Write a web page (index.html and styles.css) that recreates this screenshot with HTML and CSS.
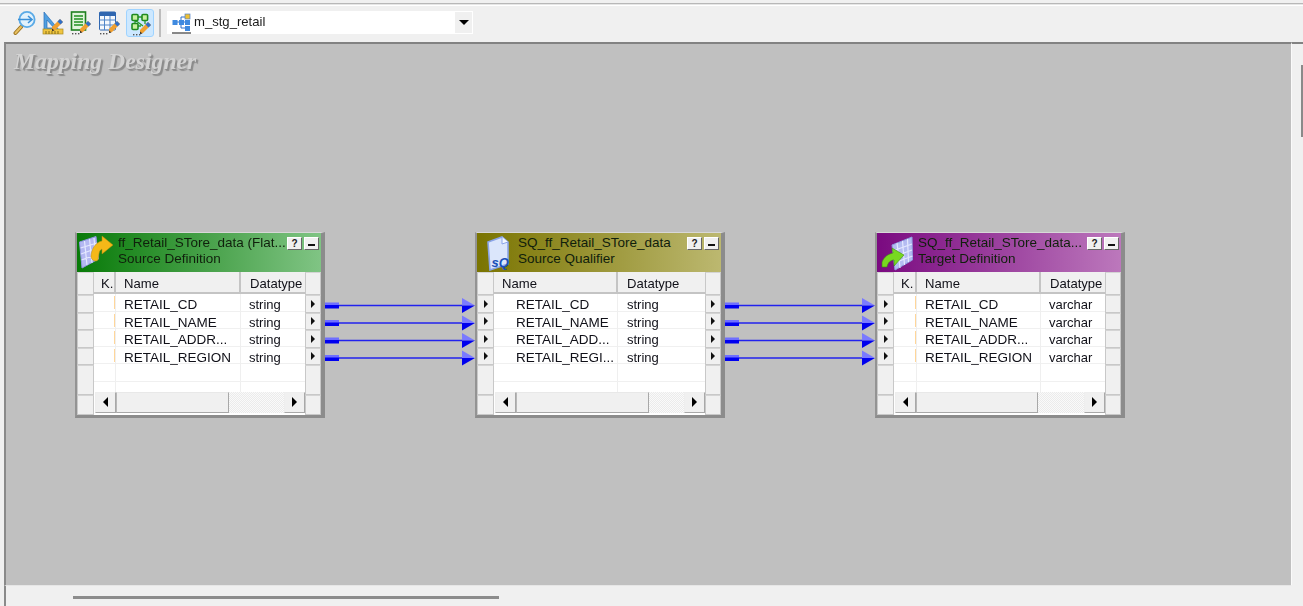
FILE: index.html
```html
<!DOCTYPE html>
<html lang="en">
<head>
<meta charset="utf-8">
<title>Mapping Designer</title>
<link rel="stylesheet" href="styles.css">
</head>
<body>
<svg class="defs" width="0" height="0" aria-hidden="true">
  <defs>
    <g id="pencil">
      <path d="M0 10 L8 2 L11 5 L3 13 L0 14 Z" fill="#f0a030"/>
      <path d="M5.5 4.5 L8 2 L11 5 L8.5 7.5 Z" fill="#2f6fc8"/>
      <path d="M0 11.5 L0 14 L2.5 13.5 Z" fill="#333"/>
    </g>
    <g id="dots" fill="#555">
      <rect x="0" width="1.4" height="1.4"/><rect x="3" width="1.4" height="1.4"/><rect x="6" width="1.4" height="1.4"/>
    </g>
  </defs>
</svg>
<div class="app">
  <div class="topline"></div>
  <div class="toolbar">
    <button class="tool" aria-label="Source Analyzer">
      <svg width="24" height="26" viewBox="0 0 24 26">
        <path d="M8 17 L2.5 23" stroke="#9c7420" stroke-width="4" stroke-linecap="round"/>
        <path d="M8 17 L2.5 23" stroke="#e8c060" stroke-width="2" stroke-linecap="round"/>
        <circle cx="14" cy="9.5" r="7.6" fill="#e2f2fc" stroke="#5aaae6" stroke-width="1.8"/>
        <path d="M5 9.5 H19 M15 6 L19 9.5 L15 13" fill="none" stroke="#3b90d8" stroke-width="1.6"/>
      </svg>
    </button>
    <button class="tool" aria-label="Target Designer">
      <svg width="22" height="26" viewBox="0 0 22 26">
        <path d="M2 2 L2 20 L17 20 Z M5 10 L5 18 L12 18 Z" fill="#4f9fe0" fill-rule="evenodd" stroke="#2a6db8" stroke-width=".7"/>
        <rect x="1" y="19" width="20" height="5" fill="#f0c540" stroke="#a88a20" stroke-width=".7"/>
        <path d="M4 21 V24 M7 21 V24 M10 21 V24 M13 21 V24 M16 21 V24" stroke="#6b5a12" stroke-width=".8"/>
        <use href="#pencil" x="10" y="7"/>
      </svg>
    </button>
    <button class="tool" aria-label="Transformation Developer">
      <svg width="22" height="26" viewBox="0 0 22 26">
        <rect x="1.5" y="2" width="14" height="18" fill="#e0f4dc" stroke="#1f8020" stroke-width="1.6"/>
        <path d="M4 6 H13 M4 9 H13 M4 12 H13 M4 15 H13" stroke="#1f9020" stroke-width="1.6"/>
        <use href="#pencil" x="10" y="9"/>
        <use href="#dots" x="2" y="23"/>
      </svg>
    </button>
    <button class="tool" aria-label="Mapplet Designer">
      <svg width="22" height="26" viewBox="0 0 22 26">
        <rect x="1.5" y="2" width="16" height="18" rx="1" fill="#f4f8fd" stroke="#2f66b0" stroke-width="1"/>
        <rect x="1.5" y="2" width="16" height="4" fill="#2f66b0"/>
        <path d="M1.5 10 H17.5 M1.5 15 H17.5 M6.5 6 V20 M12 6 V20" stroke="#4f85c8" stroke-width="1"/>
        <use href="#pencil" x="11" y="9"/>
        <use href="#dots" x="2" y="23"/>
      </svg>
    </button>
    <button class="tool tool-on" aria-label="Mapping Designer">
      <svg width="22" height="26" viewBox="0 0 22 26">
        <path d="M6 7 H16 M6 7 V16 M16 7 V14 M9 16 H12 M6 10 L14 16" stroke="#2a9a2a" stroke-width="1.3" fill="none"/>
        <rect x="3" y="4.5" width="6" height="6" rx="1" fill="#c8f0a0" stroke="#1f8a1f" stroke-width="1.6"/>
        <rect x="13" y="4.5" width="5.6" height="6" rx="1" fill="#c8f0a0" stroke="#1f8a1f" stroke-width="1.6"/>
        <rect x="3" y="13.5" width="6" height="6" rx="1" fill="#c8f0a0" stroke="#1f8a1f" stroke-width="1.6"/>
        <use href="#pencil" x="11" y="10"/>
        <use href="#dots" x="4" y="24"/>
      </svg>
    </button>
    <div class="sep"></div>
    <div class="combo">
      <svg class="combo-icon" width="20" height="22" viewBox="0 0 20 22">
        <path d="M4 10 H14 M9 5 V16 M9 5 H14 M9 16 H14" stroke="#2f6fc8" stroke-width="1"/>
        <rect x="0.5" y="8" width="5" height="5" fill="#3f8ae0"/>
        <rect x="7" y="8" width="5" height="5" fill="#3f8ae0"/>
        <rect x="13" y="2" width="5" height="5" fill="#f0c030" stroke="#4f7fc8" stroke-width=".7"/>
        <rect x="13" y="8" width="5" height="5" fill="#3f8ae0"/>
        <rect x="13" y="14" width="5" height="5" fill="#3f8ae0"/>
        <path d="M0 21 H19" stroke="#111" stroke-width="1"/>
      </svg>
      <span class="combo-text">m_stg_retail</span>
      <span class="combo-btn"><i class="down"></i></span>
    </div>
  </div>

  <div class="work">
    <div class="canvas">
      <div class="wm">Mapping Designer</div>

      <svg class="links" width="1285" height="542" viewBox="0 0 1285 542">
        <g id="linkset">
          <g id="l1">
            <path d="M318 258.5 H333 V262 H318 Z" fill="#6f6fff"/>
            <path d="M318 261 H333 V264.5 H318 Z" fill="#0000f0"/>
            <path d="M333 261.5 H456" stroke="#2222ee" stroke-width="1.5"/>
            <path d="M456 254 L469 261.5 L456 261.5 Z" fill="#7a7aff"/>
            <path d="M456 261.5 L469 261.5 L456 269 Z" fill="#0000ee"/>
          </g>
          <use href="#l1" y="17.5"/>
          <use href="#l1" y="35"/>
          <use href="#l1" y="52.5"/>
        </g>
        <use href="#linkset" x="400"/>
      </svg>

      <section class="node n1">
        <header class="title">
          <svg class="ticon" width="36" height="36" viewBox="0 0 36 36">
            <path d="M0.5 7 L17 1.5 L19.5 24 L3 33 Z" fill="#b4b8f2" stroke="#8f96e0" stroke-width="1"/>
            <path d="M5.5 6 L8 30 M10.5 4 L13 28 M15 3 L17 25 M1.5 13 L18 8 M2 19 L18.5 13 M2.5 25 L19 19" stroke="#e4e8ff" stroke-width="1.2"/>
            <path d="M12 22 C12 14 17 7 23 6 L23 1 L34 10 L23 19 L23 14 C20 15 20 19 19 25 C17 27 13 26 12 22 Z" fill="#f4b818" stroke="#b88a10" stroke-width=".5"/>
          </svg>
          <div class="ttext"><div>ff_Retail_STore_data (Flat...</div><div>Source Definition</div></div>
          <div class="tbtns"><button class="wbtn">?</button><button class="wbtn"><i class="min"></i></button></div>
        </header>
        <div class="body">
          <div class="gutter">
            <div class="g g-h"></div><div class="g"></div><div class="g"></div><div class="g"></div><div class="g"></div><div class="g g-t"></div><div class="g g-b"></div>
          </div>
          <div class="table">
            <div class="hdr"><span class="c ck">K.</span><span class="c cn">Name</span><span class="c cd">Datatype</span></div>
            <div class="row"><span class="k"></span><span class="nm">RETAIL_CD</span><span class="dt">string</span></div>
            <div class="row"><span class="k"></span><span class="nm">RETAIL_NAME</span><span class="dt">string</span></div>
            <div class="row"><span class="k"></span><span class="nm">RETAIL_ADDR...</span><span class="dt">string</span></div>
            <div class="row"><span class="k"></span><span class="nm">RETAIL_REGION</span><span class="dt">string</span></div>
            <div class="row blank"><span class="k"></span><span class="nm"></span><span class="dt"></span></div>
            <div class="row blank cut"><span class="k"></span><span class="nm"></span><span class="dt"></span></div>
            <div class="sb"><span class="sbb"><i class="al"></i></span><span class="thumb th1"></span><span class="track"></span><span class="sbb"><i class="ar"></i></span></div>
          </div>
          <div class="gutter">
            <div class="g g-h"></div><div class="g"><i class="pt"></i></div><div class="g"><i class="pt"></i></div><div class="g"><i class="pt"></i></div><div class="g"><i class="pt"></i></div><div class="g g-t"></div><div class="g g-b"></div>
          </div>
        </div>
      </section>

      <section class="node n2">
        <header class="title">
          <svg class="ticon" width="36" height="36" viewBox="0 0 36 36">
            <path d="M9 7 L23 2 L29 7 L29 29 L11 35 Z" fill="#dbe6fb" stroke="#8aa4e8" stroke-width="1.6"/>
            <path d="M23 2 L23 9 L29 7" fill="#f4f8ff" stroke="#8aa4e8"/>
            <text x="12.5" y="32" class="sq">sQ</text>
          </svg>
          <div class="ttext"><div>SQ_ff_Retail_STore_data</div><div>Source Qualifier</div></div>
          <div class="tbtns"><button class="wbtn">?</button><button class="wbtn"><i class="min"></i></button></div>
        </header>
        <div class="body">
          <div class="gutter">
            <div class="g g-h"></div><div class="g"><i class="pt"></i></div><div class="g"><i class="pt"></i></div><div class="g"><i class="pt"></i></div><div class="g"><i class="pt"></i></div><div class="g g-t"></div><div class="g g-b"></div>
          </div>
          <div class="table">
            <div class="hdr"><span class="c cn">Name</span><span class="c cd">Datatype</span></div>
            <div class="row"><span class="nm">RETAIL_CD</span><span class="dt">string</span></div>
            <div class="row"><span class="nm">RETAIL_NAME</span><span class="dt">string</span></div>
            <div class="row"><span class="nm">RETAIL_ADD...</span><span class="dt">string</span></div>
            <div class="row"><span class="nm">RETAIL_REGI...</span><span class="dt">string</span></div>
            <div class="row blank"><span class="nm"></span><span class="dt"></span></div>
            <div class="row blank cut"><span class="nm"></span><span class="dt"></span></div>
            <div class="sb"><span class="sbb"><i class="al"></i></span><span class="thumb th2"></span><span class="track"></span><span class="sbb"><i class="ar"></i></span></div>
          </div>
          <div class="gutter">
            <div class="g g-h"></div><div class="g"><i class="pt"></i></div><div class="g"><i class="pt"></i></div><div class="g"><i class="pt"></i></div><div class="g"><i class="pt"></i></div><div class="g g-t"></div><div class="g g-b"></div>
          </div>
        </div>
      </section>

      <section class="node n3">
        <header class="title">
          <svg class="ticon" width="36" height="36" viewBox="0 0 36 36">
            <path d="M13 10 L33 2 L33.5 25 L16 35 Z" fill="#b4bcf2" stroke="#8f9ce0" stroke-width="1"/>
            <path d="M18 8 L21 33 M23.5 6 L25.5 30 M28.5 4 L29.5 27 M13.5 16 L33 9 M14 22 L33 15 M15 28 L33.5 21" stroke="#e4e8ff" stroke-width="1.2"/>
            <path d="M3 27 C5 22 9 19 14 18 L13 13 L25 20 L15 31 L15 25 C12 25 9 27 8 32 L3 32 Z" fill="#78d820" stroke="#3a8a10" stroke-width=".6"/>
          </svg>
          <div class="ttext"><div>SQ_ff_Retail_STore_data...</div><div>Target Definition</div></div>
          <div class="tbtns"><button class="wbtn">?</button><button class="wbtn"><i class="min"></i></button></div>
        </header>
        <div class="body">
          <div class="gutter">
            <div class="g g-h"></div><div class="g"><i class="pt"></i></div><div class="g"><i class="pt"></i></div><div class="g"><i class="pt"></i></div><div class="g"><i class="pt"></i></div><div class="g g-t"></div><div class="g g-b"></div>
          </div>
          <div class="table">
            <div class="hdr"><span class="c ck">K.</span><span class="c cn">Name</span><span class="c cd">Datatype</span></div>
            <div class="row"><span class="k"></span><span class="nm">RETAIL_CD</span><span class="dt">varchar</span></div>
            <div class="row"><span class="k"></span><span class="nm">RETAIL_NAME</span><span class="dt">varchar</span></div>
            <div class="row"><span class="k"></span><span class="nm">RETAIL_ADDR...</span><span class="dt">varchar</span></div>
            <div class="row"><span class="k"></span><span class="nm">RETAIL_REGION</span><span class="dt">varchar</span></div>
            <div class="row blank"><span class="k"></span><span class="nm"></span><span class="dt"></span></div>
            <div class="row blank cut"><span class="k"></span><span class="nm"></span><span class="dt"></span></div>
            <div class="sb"><span class="sbb"><i class="al"></i></span><span class="thumb th3"></span><span class="track"></span><span class="sbb"><i class="ar"></i></span></div>
          </div>
          <div class="gutter">
            <div class="g g-h"></div><div class="g"></div><div class="g"></div><div class="g"></div><div class="g"></div><div class="g g-t"></div><div class="g g-b"></div>
          </div>
        </div>
      </section>
    </div>
    <div class="vscroll"><div class="vthumb"></div></div>
  </div>
  <div class="hscroll"><div class="hthumb"></div></div>
</div>
</body>
</html>
```
FILE: styles.css
```css
* { box-sizing: border-box; }
html, body { margin: 0; padding: 0; height: 100%; overflow: hidden; background: #f0f0f0; }
body { font-family: "Liberation Sans", Arial, sans-serif; font-size: 13.5px; color: #101018; }
.defs { position: absolute; }
.app { width: 1303px; height: 606px; display: flex; flex-direction: column; filter: blur(.4px); }

.topline { flex: none; height: 3px; margin-top: 3px; border-top: 1px solid #b8b8b8; border-bottom: 1px solid #fff; background: #e6e6e6; }
.toolbar { flex: none; height: 36px; display: flex; align-items: center; padding: 0 0 3px 11px; }
.tool { width: 28px; height: 28px; padding: 0; border: 1px solid transparent; background: none; display: flex; align-items: center; justify-content: center; }
.tool-on { margin-left: 3px; background: #cde8ff; border-color: #9fd3ff; border-radius: 3px; }
.sep { width: 2px; height: 28px; background: #bdbdbd; margin: 0 6px 0 5px; }
.combo { width: 306px; height: 23px; background: #fff; display: flex; align-items: center; padding-left: 5px; }
.combo-icon { flex: none; }
.combo-text { margin-left: 2px; padding-bottom: 2px; font-size: 13.1px; color: #1a1a1a; flex: 1; }
.combo-btn { width: 17px; height: 21px; background: #f0f0f0; display: flex; align-items: center; justify-content: center; margin-right: 1px; }
.down { width: 0; height: 0; border: 5px solid transparent; border-top: 5px solid #000; border-bottom: 0; }

.work { flex: 1; display: flex; min-height: 0; padding-left: 4px; }
.canvas { position: relative; flex: none; width: 1288px; background: #c0c0c0; border-top: 2px solid #828282; border-left: 2px solid #8a8a8a; border-right: 1px solid #fafafa; border-bottom: 1px solid #e6e6e6; overflow: hidden; }
.vscroll { flex: 1; position: relative; border-top: 2px solid #828282; }
.vthumb { position: absolute; top: 21px; right: 0; width: 2px; height: 72px; background: #8a8a8a; }
.hscroll { flex: none; height: 20px; padding: 10px 0 0 73px; position: relative; }
.hscroll::before { content: ""; position: absolute; left: 4px; top: 0; bottom: 0; width: 2px; background: #8a8a8a; }
.hthumb { width: 426px; height: 2.5px; background: #8c8c8c; }

.wm { position: absolute; left: 8px; top: 4px; font-family: "Liberation Serif", serif; font-style: italic; font-weight: bold; font-size: 23.7px; color: #d4d4d4; text-shadow: 1px 1px 1px #8c8c8c, 2px 2px 1px #8c8c8c; white-space: nowrap; }
.links { position: absolute; left: 0; top: 0; }

.node { position: absolute; top: 188px; width: 250px; height: 186px; background: #f0f0f0; border: 2px solid #939393; border-top: 1px solid #d8d8d8; border-right: 4px solid #8c8c8c; border-bottom: 3px solid #8c8c8c; display: flex; flex-direction: column; }
.n1 { left: 69px; --cols: 22px 125px 64px; --title: #087a08; --title2: #80c484; }
.n2 { left: 469px; --cols: 124px 87px; --title: #7a7400; --title2: #bcb870; }
.n3 { left: 869px; --cols: 23px 124px 64px; --title: #7a0a80; --title2: #bc78bc; }

.title { flex: none; height: 39px; display: flex; align-items: flex-start; background: linear-gradient(90deg, var(--title), var(--title2)); position: relative; }
.ticon { flex: none; margin: 2px 0 0 2px; }
.ttext { margin: 2px 0 0 3px; line-height: 16px; color: #10200c; white-space: nowrap; flex: 1; }
.tbtns { display: flex; gap: 2px; position: absolute; right: 2px; top: 4px; }
.wbtn { width: 15px; height: 13px; padding: 0; border: 1px solid #666; border-top-color: #fff; border-left-color: #fff; background: #f0f0f0; font: bold 10px/10px "Liberation Sans", sans-serif; color: #222; display: flex; align-items: center; justify-content: center; }
.min { display: block; width: 7px; height: 2px; background: #111; margin-top: 3px; }

.body { flex: 1; display: flex; min-height: 0; }
.gutter { flex: none; width: 17px; display: flex; flex-direction: column; }
.gutter:last-child { width: 16px; }
.g { flex: none; height: 17.5px; background: #f0f0f0; border: 1px solid #c8c8c8; border-top-color: #d4d4d4; display: flex; align-items: center; justify-content: center; }
.g-h { height: 23px; }
.g-t { height: 30px; }
.g-b { height: 20px; }
.pt { display: block; width: 0; height: 0; border: 4px solid transparent; border-left: 4px solid #111; border-right: 0; }

.table { flex: 1; min-width: 0; background: #fff; display: flex; flex-direction: column; }
.hdr { flex: none; height: 22px; display: grid; grid-template-columns: var(--cols); background: #f0f0f0; border-bottom: 2px solid #c4c4c4; font-size: 13.1px; }
.c { display: flex; align-items: center; padding: 2px 0 0 8px; border-right: 2px solid #c4c4c4; white-space: nowrap; overflow: hidden; }
.ck { padding-left: 7px; }
.cd:last-child { border-right: 0; padding-left: 9px; }
.row { flex: none; height: 17.5px; display: grid; grid-template-columns: var(--cols); border-bottom: 1px solid #f0f0f0; align-items: center; white-space: nowrap; }
.row > * { height: 100%; display: flex; align-items: center; padding-top: 3px; border-right: 1px solid #efefef; }
.row > :last-child { border-right: 0; }
.k { position: relative; }
.k::after { content: ""; position: absolute; right: 0; top: 2px; bottom: 3px; width: 1px; background: #ffd69a; }
.blank .k::after { display: none; }
.nm { padding-left: 8px; }
.n2 .nm { padding-left: 22px; }
.dt { padding-left: 8px; font-size: 13px; }
.n2 .dt { padding-left: 9px; }
.cut { height: 10px; border-bottom: 0; }
.sb { flex: none; height: 21px; margin-left: 1px; display: flex; background: #f0f0f0; }
.sbb { flex: none; width: 21px; background: #f0f0f0; border: 1px solid #a8a8a8; border-top-color: #eee; border-left-color: #eee; display: flex; align-items: center; justify-content: center; }
.thumb { flex: none; background: #f0f0f0; border: 1px solid #a8a8a8; border-top-color: #e8e8e8; border-left-color: #b8b8b8; }
.th1 { width: 113px; }
.th2 { width: 133px; }
.th3 { width: 122px; }
.track { flex: 1; background: repeating-conic-gradient(#fafafa 0 25%, #ebebeb 0 50%) 0 0 / 2px 2px; }
.al, .ar { display: block; width: 0; height: 0; border: 5px solid transparent; }
.al { border-right: 5px solid #000; border-left: 0; }
.ar { border-left: 5px solid #000; border-right: 0; }
.sq { font: bold italic 13px "Liberation Sans", sans-serif; fill: #1a50b8; }
```
